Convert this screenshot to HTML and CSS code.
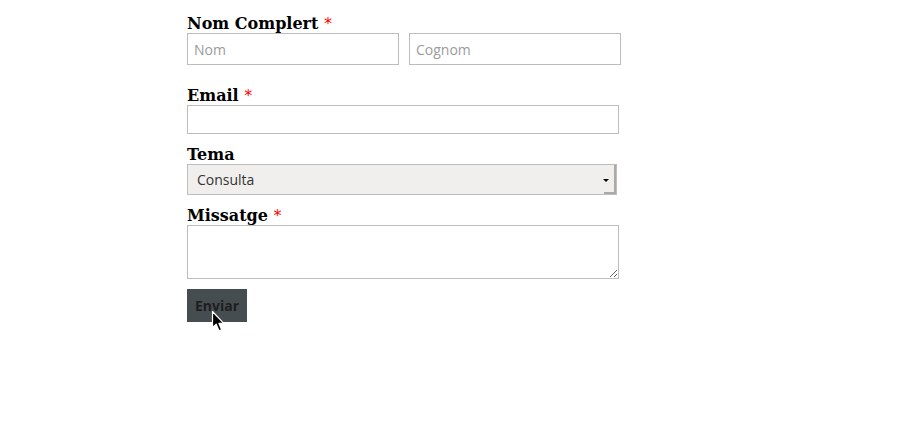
FILE: index.html
```html
<!DOCTYPE html>
<html lang="ca">
<head>
<meta charset="utf-8">
<title>Contacte</title>
<link rel="stylesheet" href="styles.css">
</head>
<body>
<form class="form">
  <label class="label">Nom Complert <span class="req">*</span></label>
  <div class="name-row">
    <input class="field field-half" type="text" placeholder="Nom">
    <input class="field field-half" type="text" placeholder="Cognom">
  </div>

  <label class="label label-email">Email <span class="req">*</span></label>
  <input class="field field-email" type="email">

  <label class="label label-tema">Tema</label>
  <div class="select">
    <span class="select-text">Consulta</span>
    <span class="select-arrow"></span>
  </div>

  <label class="label label-msg">Missatge <span class="req">*</span></label>
  <textarea class="field field-msg"></textarea>

  <div class="actions">
    <button class="btn" type="button">Enviar</button>
    <svg class="cursor" width="15" height="23" viewBox="0 0 15 23">
      <path d="M1.5 1.5 L1.5 17.5 L5.2 14.2 L8 20.8 L10.6 19.7 L7.9 13.3 L12.8 13.3 Z" fill="#000" stroke="#fff" stroke-width="1.2" stroke-linejoin="round"/>
    </svg>
  </div>
</form>
</body>
</html>
```
FILE: styles.css
```css
html, body {
  margin: 0;
  padding: 0;
  background: #fff;
}

body {
  min-height: 100vh;
}

.form {
  display: flex;
  flex-direction: column;
  align-items: flex-start;
  padding: 13px 0 0 187px;
}

.label {
  display: block;
  font-family: "DejaVu Serif", serif;
  font-weight: bold;
  font-size: 16px;
  line-height: 18px;
  padding-top: 2px;
  color: #000;
}

.req {
  color: #f00;
  font-family: "DejaVu Sans", sans-serif;
  font-weight: normal;
  font-size: 16px;
}

.label-email { margin-top: 20px; }
.label-tema { margin-top: 10px; }
.label-msg { margin-top: 10px; }

.name-row {
  display: flex;
  gap: 10px;
}

.field {
  box-sizing: border-box;
  margin: 0;
  border: 1px solid #bdbdbd;
  border-radius: 0;
  background: #fff;
  font-family: "Open Sans", "DejaVu Sans", sans-serif;
  font-size: 14px;
  color: #333;
  padding: 0 6px;
  outline: none;
}

.field::placeholder {
  color: #9b9b9b;
}

.field-half {
  width: 212px;
  height: 32px;
}

.field-email {
  width: 432px;
  height: 29px;
}

.select {
  position: relative;
  box-sizing: border-box;
  width: 430px;
  height: 31px;
  border: 1px solid #bdbdbd;
  background: #f0efed;
  box-shadow: inset -2px 0 0 #a9a9a9;
  display: flex;
  align-items: center;
  justify-content: space-between;
  padding: 0 7px 0 9px;
  font-family: "Open Sans", "DejaVu Sans", sans-serif;
  font-size: 14px;
  color: #333;
}

.select::after {
  content: "";
  position: absolute;
  right: 0;
  bottom: 0;
  width: 12px;
  height: 2px;
  background: #a9a9a9;
}

.select-arrow {
  width: 0;
  height: 0;
  border-left: 3px solid transparent;
  border-right: 3px solid transparent;
  border-top: 3px solid #000;
  margin-top: 1px;
}

.field-msg {
  width: 432px;
  height: 54px;
  resize: both;
  display: block;
}

.actions {
  position: relative;
  margin-top: 10px;
}

.btn {
  box-sizing: border-box;
  width: 60px;
  height: 33px;
  margin: 0;
  border: none;
  border-radius: 0;
  background: #464d50;
  color: #1e1e1e;
  font-family: "Open Sans", "DejaVu Sans", sans-serif;
  font-weight: bold;
  font-size: 14px;
  padding: 0;
  display: block;
}

.cursor {
  position: absolute;
  left: 24px;
  top: 21px;
  display: block;
  overflow: visible;
}
```
